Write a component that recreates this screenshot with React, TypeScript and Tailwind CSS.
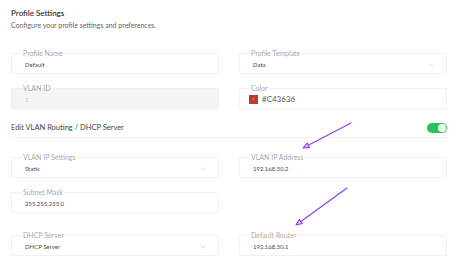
import React from "react";

type FieldProps = {
  label: string;
  value: string;
  select?: boolean;
  disabled?: boolean;
  swatch?: string;
  className?: string;
};

function Chevron() {
  return (
    <svg width="6" height="4" viewBox="0 0 6 4" className="text-[#cfcfcf]" aria-hidden="true">
      <path d="M0.5 0.8 L3 3.2 L5.5 0.8" fill="none" stroke="currentColor" strokeWidth="0.7" />
    </svg>
  );
}

function Field({ label, value, select, disabled, swatch, className = "" }: FieldProps) {
  return (
    <fieldset
      className={`h-[25px] min-w-0 rounded-[2px] border border-[#f0f0f0] pl-[10px] pr-[12px] ${
        disabled ? "bg-[#f4f5f7]" : "bg-white"
      } ${className}`}
    >
      <legend className="px-[1px] text-[7px] leading-[8px] text-[#a8a8a8]">{label}</legend>
      {swatch ? (
        <div className="-ml-[1px] mt-[2px] flex items-center gap-[4px]">
          <span
            className="flex h-[9px] w-[9px] items-center justify-center text-[4px] leading-none text-white/70"
            style={{ backgroundColor: swatch }}
          >
            v
          </span>
          <span className="text-[8px] leading-[10px] text-[#5a5a5a]">{value}</span>
        </div>
      ) : (
        <div className="mt-[4px] flex items-center justify-between pl-[3px]">
          <span
            className={`text-[6px] leading-[8px] ${disabled ? "text-[#bdbdbd]" : "text-[#4a4a4a]"}`}
          >
            {value}
          </span>
          {select && <Chevron />}
        </div>
      )}
    </fieldset>
  );
}

function Toggle() {
  return (
    <div className="flex h-[10px] w-[20px] items-center justify-end rounded-full bg-[#22c55e] pr-[1px]">
      <div className="h-[8px] w-[8px] rounded-full bg-white" />
    </div>
  );
}

function Arrows() {
  return (
    <svg
      className="pointer-events-none absolute left-0 top-0"
      width="474"
      height="266"
      viewBox="0 0 474 266"
      aria-hidden="true"
    >
      <g stroke="#8a3cf0" strokeWidth="1.1" strokeLinecap="round" strokeLinejoin="round">
        <line x1="351" y1="123" x2="308.3" y2="145.2" />
        <polygon points="303,148 307.2,143 309.5,147.4" fill="#d9c2fb" />
        <line x1="347" y1="188" x2="300.9" y2="221.5" />
        <polygon points="296,225 299.4,219.5 302.4,223.5" fill="#d9c2fb" />
      </g>
    </svg>
  );
}

export default function App() {
  return (
    <div className="relative h-[266px] w-[474px] overflow-hidden bg-white pl-[11px] pr-[27px] pt-[8px] font-['Lato',sans-serif]">
      <h1 className="text-[8px] font-semibold leading-[10px] text-[#333]">Profile Settings</h1>
      <p className="mt-[2px] text-[7px] leading-[10px] text-[#666]">
        Configure your profile settings and preferences.
      </p>

      <div className="mt-[19px] grid grid-cols-2 gap-x-[20px] gap-y-[10px]">
        <Field label="Profile Name" value="Default" />
        <Field label="Profile Template" value="Data" select />
        <Field label="VLAN ID" value="1" disabled />
        <Field label="Color" value="#C43636" swatch="#c43636" />
      </div>

      <div className="mt-[9px] flex h-[20px] items-center justify-between border-b border-[#f0f0f0]">
        <span className="text-[7.5px] text-[#444]">Edit VLAN Routing / DHCP Server</span>
        <Toggle />
      </div>

      <div className="mt-[15px] grid grid-cols-2 gap-x-[20px] gap-y-[10px]">
        <Field label="VLAN IP Settings" value="Static" select />
        <Field label="VLAN IP Address" value="192.168.50.2" />
        <Field label="Subnet Mask" value="255.255.255.0" />
        <div />
        <Field label="DHCP Server" value="DHCP Server" select className="mt-[8px]" />
        <Field label="Default Router" value="192.168.50.1" className="mt-[8px]" />
      </div>

      <Arrows />
    </div>
  );
}
